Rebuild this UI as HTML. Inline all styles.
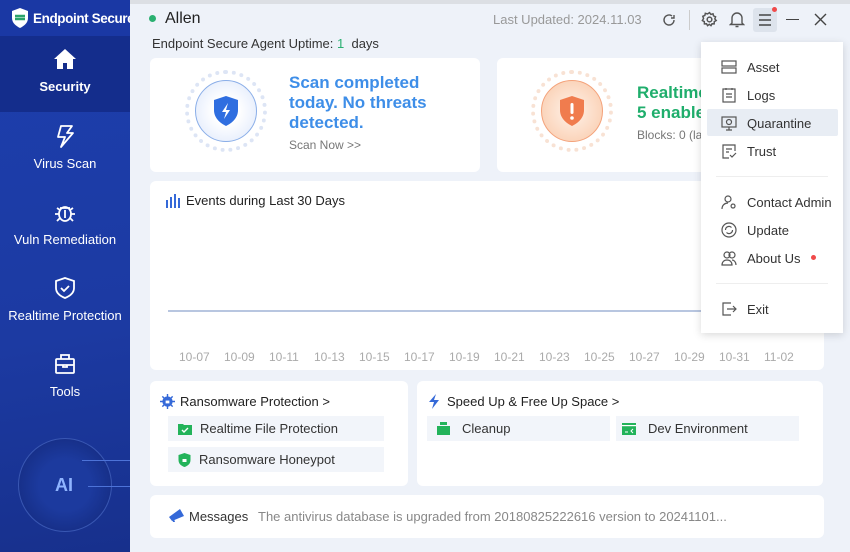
<!DOCTYPE html>
<html><head><meta charset="utf-8">
<style>
*{margin:0;padding:0;box-sizing:border-box}
body{width:850px;height:552px;overflow:hidden;font-family:"Liberation Sans","Noto Sans CJK SC",sans-serif;background:#eef2f9;position:relative;color:#333}
.abs{position:absolute}
.side{left:0;top:0;width:130px;height:552px;background:linear-gradient(170deg,#1d3fae 0%,#1c3aa2 60%,#17308c 100%)}
.logo{left:0;top:0;width:130px;height:36px;background:#1a38a4;color:#fff;font-weight:bold;font-size:13.5px;letter-spacing:-0.4px;display:flex;align-items:center;padding-left:10px;gap:3px;white-space:nowrap;overflow:hidden}
.logo svg{flex-shrink:0}
.nav{width:130px;text-align:center;color:#fff;font-size:13px}
.nav svg{display:block;margin:0 auto 8px}
.card{background:#fff;border-radius:6px}
.menu{left:701px;top:42px;width:142px;height:291px;background:#fff;box-shadow:0 2px 8px rgba(0,0,0,.15)}
.mi{position:absolute;left:20px;font-size:13px;color:#333;display:flex;align-items:center;gap:10px}
.mi svg{width:16px;height:16px}
.sub{position:absolute;background:#f2f5fa;height:25px;font-size:13px;color:#333;display:flex;align-items:center;gap:8px;padding-left:10px}
</style></head><body>
<div class="abs" style="left:130px;top:0;width:720px;height:4px;background:#dcdfe4"></div>
<div class="abs side"></div>
<div class="abs logo"><svg width="20" height="22" viewBox="0 0 20 22"><path d="M10 1L18 4v7c0 5-4 8-8 10C6 19 2 16 2 11V4z" fill="#fff"/><path d="M5 9h10M5 12h10" stroke="#2ba36b" stroke-width="2.5"/></svg><span>Endpoint Secure</span></div>
<div class="abs" style="left:0;top:36px;width:130px;height:76px;background:#142d8c"></div>
<div class="abs nav" style="top:47px;font-weight:bold"><svg width="24" height="24" viewBox="0 0 24 24"><path d="M12 2L1 12h3v10h6v-6h4v6h6V12h3z" fill="#fff"/></svg>Security</div>
<div class="abs nav" style="top:124px"><svg width="24" height="24" viewBox="0 0 24 24" fill="none" stroke="#fff" stroke-width="1.8" stroke-linejoin="round"><path d="M8 2h11l-5 7h6L8 23l4-10H5z"/></svg>Virus Scan</div>
<div class="abs nav" style="top:200px"><svg width="24" height="24" viewBox="0 0 24 24" fill="none" stroke="#fff" stroke-width="1.8"><ellipse cx="12" cy="14" rx="6" ry="7"/><path d="M7 8h10M12 10v8M2 14h4M18 14h4M4 8l3 2M20 8l-3 2M4 21l3-3M20 21l-3-3"/></svg>Vuln Remediation</div>
<div class="abs nav" style="top:276px"><svg width="24" height="24" viewBox="0 0 24 24" fill="none" stroke="#fff" stroke-width="1.8"><path d="M12 2l9 3v7c0 5-4 8-9 10-5-2-9-5-9-10V5z"/><path d="M8 12l3 3 5-5"/></svg>Realtime Protection</div>
<div class="abs nav" style="top:352px"><svg width="24" height="24" viewBox="0 0 24 24" fill="none" stroke="#fff" stroke-width="1.8"><rect x="3" y="7" width="18" height="14" rx="1"/><path d="M8 7V3h8v4M3 13h18M10 13v2h4v-2"/></svg>Tools</div>
<div class="abs" style="left:18px;top:438px;width:94px;height:94px;border-radius:50%;border:1px solid rgba(120,160,255,.35);background:radial-gradient(circle,#1c3a9e 40%,#17308a 70%)"></div>
<div class="abs" style="left:55px;top:475px;color:#8fb4ff;font-weight:bold;font-size:18px">AI</div>
<div class="abs" style="left:82px;top:460px;width:48px;height:1px;background:#4d73d8"></div>
<div class="abs" style="left:88px;top:486px;width:42px;height:1px;background:#4d73d8"></div>

<div class="abs" style="left:149px;top:15px;width:7px;height:7px;border-radius:50%;background:#2ab071"></div>
<div class="abs" style="left:165px;top:10px;font-size:16px;color:#222">Allen</div>
<div class="abs" style="left:152px;top:36px;font-size:13px;color:#333">Endpoint Secure Agent Uptime: <span style="color:#2ab071">1</span>&nbsp; days</div>
<div class="abs" style="left:493px;top:12px;font-size:13px;color:#999">Last Updated:&nbsp;2024.11.03</div>
<svg class="abs" style="left:661px;top:12px" width="16" height="16" viewBox="0 0 16 16" fill="none" stroke="#555" stroke-width="1.4"><path d="M13 8a5 5 0 1 1-2-4M13 3v3h-3"/></svg>
<div class="abs" style="left:689px;top:10px;width:1px;height:20px;background:#ccc"></div>
<svg class="abs" style="left:701px;top:11px" width="17" height="17" viewBox="0 0 16 16" fill="none" stroke="#555" stroke-width="1.4"><circle cx="8" cy="8" r="2.2"/><path d="M8 1.5l1.3 1.7 2-.6.5 2 1.9.8-.7 2 1.3 1.6-1.8 1-.1 2.1-2-.1-1 1.8-1.6-1.300-1.6 1.3-1-1.8-2 .1-.1-2.1-1.8-1L2.4 7 1.7 5l1.9-.8.5-2 2 .6z"/></svg>
<svg class="abs" style="left:729px;top:11px" width="16" height="17" viewBox="0 0 16 17" fill="none" stroke="#555" stroke-width="1.4"><path d="M3 12V7a5 5 0 0 1 10 0v5l1.5 1.5h-13zM6.5 15.5h3"/></svg>
<div class="abs" style="left:753px;top:8px;width:24px;height:24px;background:#dde3ec;border-radius:3px"></div>
<svg class="abs" style="left:758px;top:13px" width="14" height="14" viewBox="0 0 14 14" stroke="#444" stroke-width="1.4"><path d="M1 2h12M1 7h12M1 12h12"/></svg>
<div class="abs" style="left:772px;top:7px;width:5px;height:5px;border-radius:50%;background:#f04a4a"></div>
<div class="abs" style="left:786px;top:19px;width:13px;height:1.4px;background:#444"></div>
<svg class="abs" style="left:814px;top:13px" width="13" height="13" viewBox="0 0 13 13" stroke="#444" stroke-width="1.4"><path d="M1 1l11 11M12 1L1 12"/></svg>

<div class="abs card" style="left:150px;top:58px;width:330px;height:114px"></div>
<div class="abs" style="left:185px;top:70px;width:82px;height:82px;border-radius:50%;border:4px dotted #dde5f5"></div>
<div class="abs" style="left:195px;top:80px;width:62px;height:62px;border-radius:50%;background:radial-gradient(circle,#fff 30%,#dbe6fb);border:1.5px solid #8aaee8"></div>
<svg class="abs" style="left:212px;top:95px" width="28" height="32" viewBox="0 0 28 32"><path d="M14 1l12 4v10c0 8-6 13-12 16C8 28 2 23 2 15V5z" fill="#2f6ee0"/><path d="M16 8l-6 9h4l-2 7 6-9h-4z" fill="#fff"/></svg>
<div class="abs" style="left:289px;top:73px;font-size:17px;font-weight:bold;color:#3e8ee8;line-height:20px">Scan completed<br>today. No threats<br>detected.</div>
<div class="abs" style="left:289px;top:138px;font-size:12px;color:#777">Scan Now &gt;&gt;</div>

<div class="abs card" style="left:497px;top:58px;width:340px;height:114px"></div>
<div class="abs" style="left:531px;top:70px;width:82px;height:82px;border-radius:50%;border:4px dotted #f8e2d4"></div>
<div class="abs" style="left:541px;top:80px;width:62px;height:62px;border-radius:50%;background:radial-gradient(circle,#fde6d6 30%,#f9c8a8);border:1.5px solid #f4a27a"></div>
<svg class="abs" style="left:558px;top:95px" width="28" height="32" viewBox="0 0 28 32"><path d="M14 1l12 4v10c0 8-6 13-12 16C8 28 2 23 2 15V5z" fill="#f07c4e"/><rect x="12.5" y="8" width="3" height="11" rx="1.5" fill="#fff"/><circle cx="14" cy="23" r="1.8" fill="#fff"/></svg>
<div class="abs" style="left:637px;top:83px;font-size:17px;font-weight:bold;color:#1fae6c;line-height:20px">Realtime<br>5 enabled</div>
<div class="abs" style="left:637px;top:128px;font-size:12px;color:#777">Blocks: 0 (last</div>

<div class="abs card" style="left:150px;top:181px;width:674px;height:189px"></div>
<svg class="abs" style="left:165px;top:194px" width="16" height="14" viewBox="0 0 16 14" fill="#3569d8"><rect x="1" y="6" width="2" height="8"/><rect x="5" y="3" width="2" height="11"/><rect x="9" y="0" width="2" height="14"/><rect x="13" y="4" width="2" height="10"/></svg>
<div class="abs" style="left:186px;top:193px;font-size:13px;color:#222">Events during Last 30 Days</div>
<div class="abs" style="left:168px;top:310px;width:640px;height:2px;background:#b8c6e0"></div>
<div class="abs" style="left:179px;top:350px;font-size:12px;color:#aaa;display:flex">
<span style="width:45px">10-07</span><span style="width:45px">10-09</span><span style="width:45px">10-11</span><span style="width:45px">10-13</span><span style="width:45px">10-15</span><span style="width:45px">10-17</span><span style="width:45px">10-19</span><span style="width:45px">10-21</span><span style="width:45px">10-23</span><span style="width:45px">10-25</span><span style="width:45px">10-27</span><span style="width:45px">10-29</span><span style="width:45px">10-31</span><span>11-02</span></div>

<div class="abs card" style="left:150px;top:381px;width:258px;height:105px"></div>
<svg class="abs" style="left:160px;top:394px" width="15" height="15" viewBox="0 0 16 16"><circle cx="8" cy="8" r="5.5" fill="#3569d8"/><path d="M8 0v3M8 13v3M0 8h3M13 8h3M2.5 2.5l2 2M11.5 11.5l2 2M2.5 13.5l2-2M11.5 4.5l2-2" stroke="#3569d8" stroke-width="1.5"/><rect x="6" y="7" width="4" height="3" fill="#fff"/></svg>
<div class="abs" style="left:180px;top:394px;font-size:13px;color:#222">Ransomware Protection &gt;</div>
<div class="sub" style="left:168px;top:416px;width:216px"><svg width="14" height="12" viewBox="0 0 14 12"><path d="M0 1h5l1 1h8v10H0z" fill="#23b35a"/><path d="M4 7l2 2 4-4" stroke="#fff" stroke-width="1.4" fill="none"/></svg><span>Realtime File Protection</span></div>
<div class="sub" style="left:168px;top:447px;width:216px"><svg width="13" height="14" viewBox="0 0 13 14"><path d="M6.5 0l6 2v5c0 4-3 6-6 7-3-1-6-3-6-7V2z" fill="#23b35a"/><rect x="4.5" y="6" width="4" height="3" fill="#fff"/></svg><span>Ransomware Honeypot</span></div>

<div class="abs card" style="left:417px;top:381px;width:406px;height:105px"></div>
<svg class="abs" style="left:428px;top:394px" width="14" height="15" viewBox="0 0 14 15"><path d="M8 0L1 8h5l-2 7 7-9H6z" fill="#3569d8"/></svg>
<div class="abs" style="left:447px;top:394px;font-size:13px;color:#222">Speed Up &amp; Free Up Space &gt;</div>
<div class="sub" style="left:427px;top:416px;width:183px;gap:12px"><svg width="13" height="13" viewBox="0 0 13 13" fill="#23b35a"><rect x="3" y="0" width="7" height="3"/><rect x="0" y="4" width="13" height="9"/></svg><span>Cleanup</span></div>
<div class="sub" style="left:616px;top:416px;width:183px;gap:12px;padding-left:6px"><svg width="14" height="12" viewBox="0 0 14 12"><rect width="14" height="12" fill="#23b35a"/><rect x="0" y="2" width="14" height="1.2" fill="#fff"/><path d="M3 9h3M11 6l-2 2 2 2" stroke="#fff" fill="none"/></svg><span>Dev Environment</span></div>

<div class="abs card" style="left:150px;top:495px;width:674px;height:43px"></div>
<svg class="abs" style="left:168px;top:508px" width="17" height="15" viewBox="0 0 17 15"><path d="M1 9l11-8 4 7-12 5z" fill="#3569d8"/><path d="M4 11l1 3h2l-1-3" fill="#3569d8"/></svg>
<div class="abs" style="left:189px;top:509px;font-size:13px;color:#333">Messages</div>
<div class="abs" style="left:258px;top:509px;font-size:13px;color:#888">The antivirus database is upgraded from 20180825222616 version to 20241101...</div>

<div class="abs menu"></div>
<div class="abs" style="left:707px;top:109px;width:131px;height:27px;background:#e8edf4;border-radius:2px"></div>
<div class="abs" style="left:716px;top:176px;width:112px;height:1px;background:#eee"></div>
<div class="abs" style="left:716px;top:283px;width:112px;height:1px;background:#eee"></div>
<div class="mi" style="left:721px;top:59px"><svg viewBox="0 0 16 16" fill="none" stroke="#555" stroke-width="1.2"><rect x="1" y="2" width="14" height="5"/><rect x="1" y="9" width="14" height="5"/></svg>Asset</div>
<div class="mi" style="left:721px;top:87px"><svg viewBox="0 0 16 16" fill="none" stroke="#555" stroke-width="1.2"><rect x="2" y="2" width="12" height="13"/><path d="M5 1v2M11 1v2M5 7h6M5 10h6"/></svg>Logs</div>
<div class="mi" style="left:721px;top:115px"><svg viewBox="0 0 16 16" fill="none" stroke="#555" stroke-width="1.2"><rect x="1" y="2" width="14" height="10"/><circle cx="8" cy="7" r="2.5"/><path d="M8 12v3M5 15h6"/></svg>Quarantine</div>
<div class="mi" style="left:721px;top:143px"><svg viewBox="0 0 16 16" fill="none" stroke="#555" stroke-width="1.2"><path d="M14 8V2H2v13h6M5 6h6M5 9h3M9 12l2 2 4-4"/></svg>Trust</div>
<div class="mi" style="left:721px;top:194px"><svg viewBox="0 0 16 16" fill="none" stroke="#555" stroke-width="1.2"><circle cx="7" cy="5" r="3"/><path d="M1 15c0-4 3-6 6-6M12 10a2 2 0 1 0 .1 0"/></svg>Contact Admin</div>
<div class="mi" style="left:721px;top:222px"><svg viewBox="0 0 16 16" fill="none" stroke="#555" stroke-width="1.2"><circle cx="8" cy="8" r="7"/><path d="M4.5 8a3.5 3.5 0 0 1 6-2.5M11.5 8a3.5 3.5 0 0 1-6 2.5"/></svg>Update</div>
<div class="mi" style="left:721px;top:250px"><svg viewBox="0 0 16 16" fill="none" stroke="#555" stroke-width="1.2"><circle cx="6" cy="5" r="3"/><circle cx="11" cy="5" r="3"/><path d="M1 15c0-3 2-5 5-5s5 2 5 5zM11 10c2 0 4 2 4 5"/></svg>About Us</div>
<div class="abs" style="left:811px;top:255px;width:5px;height:5px;border-radius:50%;background:#f04a4a"></div>
<div class="mi" style="left:721px;top:301px"><svg viewBox="0 0 16 16" fill="none" stroke="#555" stroke-width="1.2"><path d="M10 2H2v12h8M6 8h9M12 5l3 3-3 3"/></svg>Exit</div>
</body></html>
